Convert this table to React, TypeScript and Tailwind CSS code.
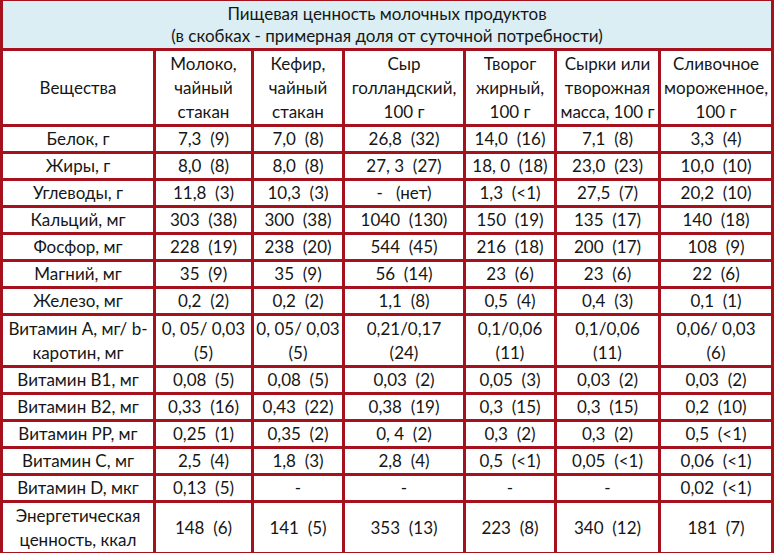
const columns = [
  'Вещества',
  'Молоко,\nчайный\nстакан',
  'Кефир,\nчайный\nстакан',
  'Сыр\nголландский,\n100 г',
  'Творог\nжирный,\n100 г',
  'Сырки или\nтворожная\nмасса, 100 г',
  'Сливочное\nмороженное,\n100 г',
];

const widths = ['w-[153px]', 'w-[98px]', 'w-[91px]', 'w-[121px]', 'w-[91px]', 'w-[104px]', 'w-[113px]'];

type Row = { cells: string[]; tall?: boolean };

const rows: Row[] = [
  { cells: ['Белок, г', '7,3  (9)', '7,0  (8)', '26,8  (32)', '14,0  (16)', '7,1  (8)', '3,3  (4)'] },
  { cells: ['Жиры, г', '8,0  (8)', '8,0  (8)', '27, 3  (27)', '18, 0  (18)', '23,0  (23)', '10,0  (10)'] },
  { cells: ['Углеводы, г', '11,8  (3)', '10,3  (3)', '-   (нет)', '1,3  (<1)', '27,5  (7)', '20,2  (10)'] },
  { cells: ['Кальций, мг', '303  (38)', '300  (38)', '1040  (130)', '150  (19)', '135  (17)', '140  (18)'] },
  { cells: ['Фосфор, мг', '228  (19)', '238  (20)', '544  (45)', '216  (18)', '200  (17)', '108  (9)'] },
  { cells: ['Магний, мг', '35  (9)', '35  (9)', '56  (14)', '23  (6)', '23  (6)', '22  (6)'] },
  { cells: ['Железо, мг', '0,2  (2)', '0,2  (2)', '1,1  (8)', '0,5  (4)', '0,4  (3)', '0,1  (1)'] },
  {
    tall: true,
    cells: [
      'Витамин А, мг/ b-\nкаротин, мг',
      '0, 05/ 0,03\n(5)',
      '0, 05/ 0,03\n(5)',
      '0,21/0,17\n(24)',
      '0,1/0,06\n(11)',
      '0,1/0,06\n(11)',
      '0,06/ 0,03\n(6)',
    ],
  },
  { cells: ['Витамин В1, мг', '0,08  (5)', '0,08  (5)', '0,03  (2)', '0,05  (3)', '0,03  (2)', '0,03  (2)'] },
  { cells: ['Витамин В2, мг', '0,33  (16)', '0,43  (22)', '0,38  (19)', '0,3  (15)', '0,3  (15)', '0,2  (10)'] },
  { cells: ['Витамин РР, мг', '0,25  (1)', '0,35  (2)', '0, 4  (2)', '0,3  (2)', '0,3  (2)', '0,5  (<1)'] },
  { cells: ['Витамин С, мг', '2,5  (4)', '1,8  (3)', '2,8  (4)', '0,5  (<1)', '0,05  (<1)', '0,06  (<1)'] },
  { cells: ['Витамин D, мкг', '0,13  (5)', '-', '-', '-', '-', '0,02  (<1)'] },
  { tall: true, cells: ['Энергетическая\nценность, ккал', '148  (6)', '141  (5)', '353  (13)', '223  (8)', '340  (12)', '181  (7)'] },
];

export default function App() {
  return (
    <div className="w-[776px] h-[553px] bg-white overflow-hidden font-['Lato','Noto_Sans',sans-serif] text-[17px] text-[#161616]">
      <table className="w-[774px] table-fixed border-collapse">
        <colgroup>
          {widths.map((w, i) => (
            <col key={i} className={w} />
          ))}
        </colgroup>
        <tbody>
          <tr className="h-[49px]">
            <td
              colSpan={7}
              className="bg-[#daeef3] border-[3px] border-t-[1px] border-[#a5121d] text-center leading-[22px] whitespace-pre"
            >
              {'Пищевая ценность молочных продуктов\n(в скобках - примерная доля от суточной потребности)'}
            </td>
          </tr>
          <tr className="h-[76px]">
            {columns.map((c, i) => (
              <td key={i} className="border-[3px] border-[#a5121d] text-center leading-[24px] whitespace-pre px-0">
                {c}
              </td>
            ))}
          </tr>
          {rows.map((r, ri) => (
            <tr key={ri} className={r.tall ? 'h-[52px]' : 'h-[26.8px]'}>
              {r.cells.map((c, ci) => (
                <td
                  key={ci}
                  className="border-[3px] border-[#a5121d] text-center leading-[24px] whitespace-pre px-0 py-0"
                >
                  {c}
                </td>
              ))}
            </tr>
          ))}
        </tbody>
      </table>
    </div>
  );
}
